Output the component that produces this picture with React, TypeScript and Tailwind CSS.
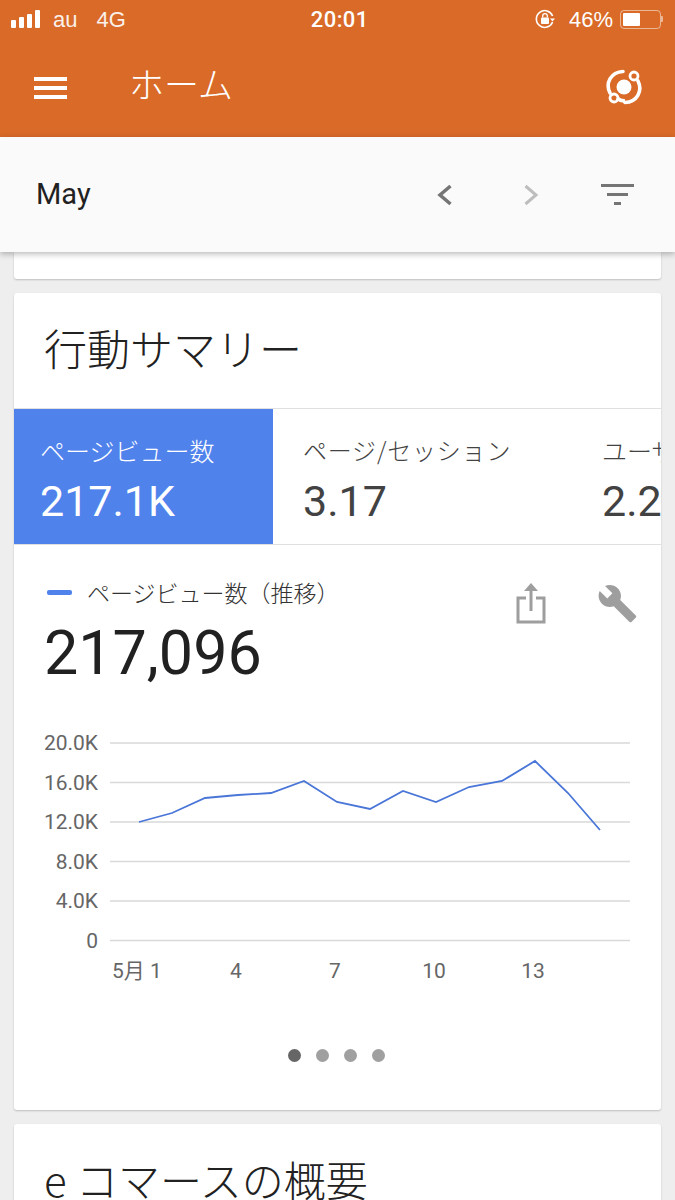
const points = [
  [139, 822], [172, 813], [205, 798], [238, 795], [271, 793], [304, 781], [337, 802], [370, 809],
  [403, 791], [436, 802], [469, 787], [502, 781], [535, 761], [568, 793], [600, 830],
];

const yAxis = [
  { label: "20.0K", y: 743 },
  { label: "16.0K", y: 782.5 },
  { label: "12.0K", y: 822 },
  { label: "8.0K", y: 861.5 },
  { label: "4.0K", y: 901 },
  { label: "0", y: 940.5 },
];

const xAxis = [
  { label: "4", x: 236 },
  { label: "7", x: 335 },
  { label: "10", x: 434 },
  { label: "13", x: 533 },
];

function StatusBar() {
  return (
    <div className="relative flex h-[38px] items-center pl-[11px] pr-[12px] text-white text-[22px] font-['Liberation_Sans',sans-serif]">
      <div className="flex items-end gap-[3px]">
        <div className="h-[8px] w-[5px] rounded-[1px] bg-white" />
        <div className="h-[11px] w-[5px] rounded-[1px] bg-white" />
        <div className="h-[14px] w-[5px] rounded-[1px] bg-white" />
        <div className="h-[18px] w-[5px] rounded-[1px] bg-white" />
      </div>
      <span className="ml-[13px] opacity-90">au</span>
      <span className="ml-[19px] opacity-90">4G</span>
      <div className="flex-1 pl-[185px] font-['Roboto',sans-serif] font-medium text-[22px] tracking-[0.4px]">20:01</div>
      <svg width="22" height="22" viewBox="0 0 22 22" fill="none" className="mr-[13px]">
        <path d="M18.6 8A8.4 8.4 0 1 0 18.6 14" stroke="white" strokeWidth="1.6" />
        <path d="M16 10.5h5l-2.5 3z" fill="white" />
        <rect x="7" y="9.5" width="8" height="6.5" rx="1" fill="white" />
        <path d="M8.7 9.5V8a2.3 2.3 0 0 1 4.6 0v1.5" stroke="white" strokeWidth="1.3" />
      </svg>
      <span>46%</span>
      <div className="ml-[7px] flex items-center">
        <div className="h-[19px] w-[41px] rounded-[4px] border border-white/50 p-[2px]">
          <div className="h-full w-[17px] rounded-[1px] bg-white" />
        </div>
        <div className="h-[6px] w-[2px] rounded-r-[1px] bg-white/50" />
      </div>
    </div>
  );
}

function LogoIcon() {
  return (
    <svg width="38" height="38" viewBox="0 0 38 38" fill="none">
      <path d="M5 25C0 15 6 4 18 3.5" stroke="white" strokeWidth="3.6" strokeLinecap="round" />
      <path d="M33 13C38 23 32 34 20 34.5" stroke="white" strokeWidth="3.6" strokeLinecap="round" />
      <path d="M12 30C14 32 17 33 20 33" stroke="white" strokeWidth="3.6" />
      <circle cx="19" cy="19" r="7.5" fill="white" />
      <circle cx="29" cy="8" r="4" stroke="white" strokeWidth="2.8" />
      <circle cx="9" cy="30" r="4" stroke="white" strokeWidth="2.8" />
    </svg>
  );
}

function AppHeader() {
  return (
    <div className="flex h-[99px] items-start pl-[34px] pr-[32px] pt-[19px] text-white">
      <div className="mt-[20px] flex w-[33px] flex-col gap-[5px]">
        <div className="h-[4px] bg-white" />
        <div className="h-[4px] bg-white" />
        <div className="h-[4px] bg-white" />
      </div>
      <div className="ml-[64px] text-[35px] leading-[56px] font-light -translate-x-[2px] -translate-y-[2px]">ホーム</div>
      <div className="ml-auto mt-[11px]">
        <LogoIcon />
      </div>
    </div>
  );
}

function FilterBar() {
  return (
    <div className="relative z-10 flex h-[115px] items-center bg-[#fafafa] pl-[36px] pr-[41px] shadow-[0_2px_6px_rgba(0,0,0,0.28)]">
      <span className="text-[29px] text-[#212121] font-['Roboto',sans-serif]">May</span>
      <svg width="16" height="22" viewBox="0 0 16 22" fill="none" className="ml-auto mr-[70px]">
        <path d="M13.5 2L3 11l10.5 9" stroke="#757575" strokeWidth="3.5" />
      </svg>
      <svg width="16" height="22" viewBox="0 0 16 22" fill="none" className="mr-[62px]">
        <path d="M2.5 2L13 11 2.5 20" stroke="#bdbdbd" strokeWidth="3" />
      </svg>
      <div className="flex w-[33px] flex-col items-center gap-[6px]">
        <div className="h-[3px] w-[33px] bg-[#757575]" />
        <div className="h-[3px] w-[21px] bg-[#757575]" />
        <div className="h-[3px] w-[7px] bg-[#757575]" />
      </div>
    </div>
  );
}

function Chart() {
  const line = points.map(([x, y]) => `${x},${y}`).join(" ");
  return (
    <svg width="647" height="290" viewBox="14 725 647 290" className="block" fontFamily="Roboto, sans-serif" fontSize="21" fill="#666666">
      {yAxis.map((tick) => (
        <g key={tick.label}>
          <line x1="110" x2="630" y1={tick.y} y2={tick.y} stroke="#d9d9d9" strokeWidth="1.5" />
          <text x="98" y={tick.y + 7} textAnchor="end">{tick.label}</text>
        </g>
      ))}
      <text x="112" y="978" fontFamily="Roboto, 'Noto Sans CJK JP', sans-serif">5月 1</text>
      {xAxis.map((tick) => (
        <text key={tick.label} x={tick.x} y="978" textAnchor="middle">{tick.label}</text>
      ))}
      <polyline points={line} fill="none" stroke="#4a76d8" strokeWidth="1.8" />
    </svg>
  );
}

function MetricTabs() {
  return (
    <div className="flex h-[137px] overflow-hidden border-y border-[#e0e0e0]">
      <div className="w-[259px] shrink-0 bg-[#5082ec] pl-[26px] pt-[24px] text-white">
        <div className="text-[25px] leading-[34px] font-light whitespace-nowrap">ページビュー数</div>
        <div className="mt-[9px] text-[43px] leading-[50px] font-['Roboto',sans-serif]">217.1K</div>
      </div>
      <div className="w-[299px] shrink-0 pl-[30px] pt-[24px] text-[#424242]">
        <div className="text-[24px] leading-[34px] font-light whitespace-nowrap tracking-[0.8px]">ページ/セッション</div>
        <div className="mt-[9px] text-[43px] leading-[50px] font-['Roboto',sans-serif]">3.17</div>
      </div>
      <div className="w-[200px] shrink-0 pl-[30px] pt-[24px] text-[#424242]">
        <div className="text-[25px] leading-[34px] font-light whitespace-nowrap">ユーザー数</div>
        <div className="mt-[9px] text-[43px] leading-[50px] font-['Roboto',sans-serif]">2.2</div>
      </div>
    </div>
  );
}

function ChartHeader() {
  return (
    <div className="flex h-[180px] items-start pl-[30px] pr-[23px]">
      <div>
        <div className="mt-[29px] flex items-center pl-[3px]">
          <div className="h-[5px] w-[25px] rounded-[2px] bg-[#5082ec]" />
          <span className="ml-[15px] text-[23px] leading-[36px] text-[#333333] font-light whitespace-nowrap">ページビュー数（推移）</span>
        </div>
        <div className="mt-[11px] text-[61px] leading-[64px] text-[#212121] font-['Roboto',sans-serif]">217,096</div>
      </div>
      <div className="ml-auto mt-[38px] flex items-start">
        <svg width="30" height="41" viewBox="0 0 30 41" fill="none" className="mr-[51px]">
          <path d="M10 15H2v24h26V15h-8" stroke="#9e9e9e" strokeWidth="3" />
          <path d="M15 28V3" stroke="#9e9e9e" strokeWidth="3" />
          <path d="M15 0l7 8H8z" fill="#9e9e9e" />
        </svg>
        <svg width="41" height="41" viewBox="0 0 24 24" fill="#9e9e9e">
          <path d="M22.7 19l-9.1-9.1c.9-2.3.4-5-1.5-6.9-2-2-5-2.4-7.4-1.3L9 6 6 9 1.6 4.7C.4 7.1.9 10.1 2.9 12.1c1.9 1.9 4.6 2.4 6.9 1.5l9.1 9.1c.4.4 1 .4 1.4 0l2.3-2.3c.5-.4.5-1.1.1-1.4z" />
        </svg>
      </div>
    </div>
  );
}

export default function App() {
  return (
    <div className="h-[1200px] w-[675px] overflow-hidden bg-[#eeeeee] font-['Noto_Sans_CJK_JP',sans-serif]">
      <div className="bg-[#d96a28]">
        <StatusBar />
        <AppHeader />
      </div>
      <FilterBar />

      <div className="flex flex-col gap-[14px] px-[14px]">
        <div className="h-[27px] rounded-b-[3px] bg-white shadow-[0_1px_2px_rgba(0,0,0,0.2)]" />

        <div className="rounded-[3px] bg-white shadow-[0_1px_2px_rgba(0,0,0,0.2)]">
          <div className="flex h-[115px] items-center pb-[6px] pl-[30px] text-[43px] text-[#212121] font-light">行動サマリー</div>
          <MetricTabs />
          <ChartHeader />
          <Chart />
          <div className="flex h-[95px] justify-center gap-[15px] pt-[34px] pr-[2px]">
            <div className="h-[13px] w-[13px] rounded-full bg-[#666666]" />
            <div className="h-[13px] w-[13px] rounded-full bg-[#a0a0a0]" />
            <div className="h-[13px] w-[13px] rounded-full bg-[#a0a0a0]" />
            <div className="h-[13px] w-[13px] rounded-full bg-[#a0a0a0]" />
          </div>
        </div>

        <div className="h-[120px] rounded-[3px] bg-white pl-[30px] pt-[25px] text-[42px] leading-[60px] text-[#212121] font-light whitespace-nowrap shadow-[0_1px_2px_rgba(0,0,0,0.2)]">
          e コマースの概要
        </div>
      </div>
    </div>
  );
}
